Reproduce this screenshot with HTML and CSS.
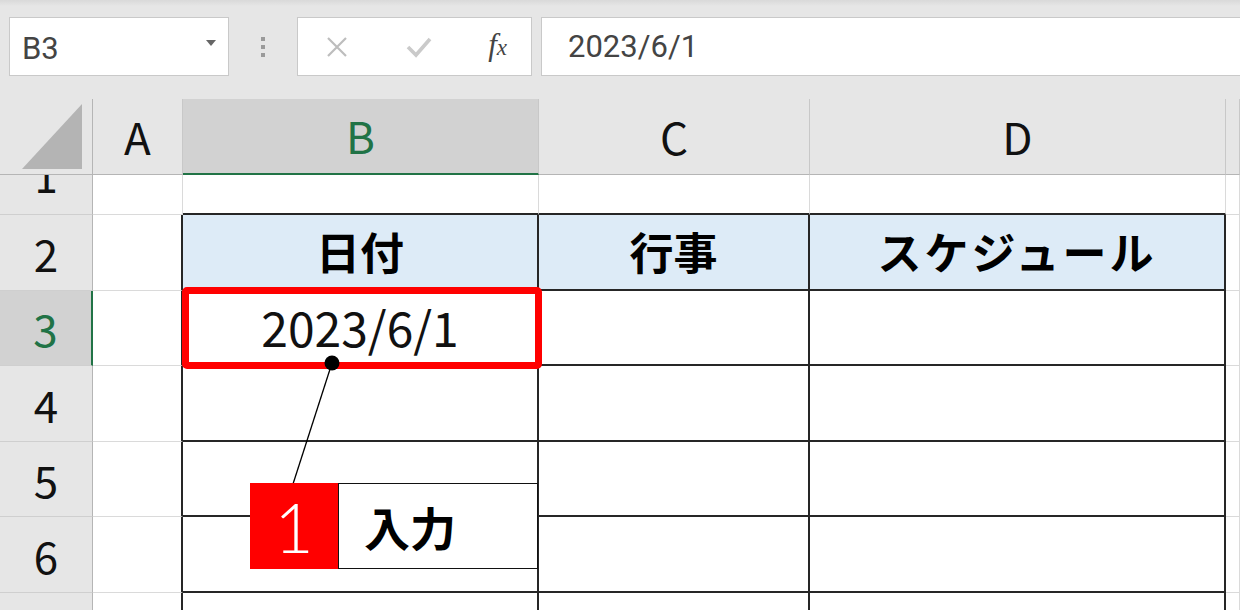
FILE: index.html
```html
<!DOCTYPE html>
<html>
<head>
  <title>B3 - 2023/6/1</title>
<link rel="stylesheet" href="styles.css">
</head>

<body>

<div class='toolbar'>
  <div class='namebox'>
    <span>B3</span>
    <span class='drop'></span>
  </div>
  <div class='grip'><i></i><i></i><i></i></div>
  <div class='fbuttons'>
    <svg class='ico' width='26' height='26' viewBox='0 0 26 26'><path d='M4 4 L22 22 M22 4 L4 22' stroke='#bdbdbd' stroke-width='2.2' fill='none'/></svg>
    <svg class='ico' width='28' height='26' viewBox='0 0 28 26'><path d='M3 13 L11 21 L25 5' stroke='#cacaca' stroke-width='3.6' fill='none'/></svg>
    <span class='fx'>f<small>x</small></span>
  </div>
  <div class='fbar'>2023/6/1</div>
</div>

<div class='sheet'>
  <!-- column headers -->
  <div class='corner'><span class='tri'></span></div>
  <div class='colh'>A</div>
  <div class='colh sel'>B</div>
  <div class='colh'>C</div>
  <div class='colh'>D</div>
  <div class='colh'></div>

  <!-- row 1 -->
  <div class='rowh cut'><span>1</span></div>
  <div class='cell'></div>
  <div class='cell top'></div>
  <div class='cell top'></div>
  <div class='cell top'></div>
  <div class='cell'></div>

  <!-- row 2 -->
  <div class='rowh'>2</div>
  <div class='cell lead'></div>
  <div class='cell tb head'>日付</div>
  <div class='cell tb head'>行事</div>
  <div class='cell tb head kana'>スケジュール</div>
  <div class='cell'></div>

  <!-- row 3 -->
  <div class='rowh sel'>3</div>
  <div class='cell lead'></div>
  <div class='cell tb data active'>2023/6/1<span class='mark'></span></div>
  <div class='cell tb'></div>
  <div class='cell tb'></div>
  <div class='cell'></div>

  <!-- row 4 -->
  <div class='rowh'>4</div>
  <div class='cell lead'></div>
  <div class='cell tb'></div>
  <div class='cell tb'></div>
  <div class='cell tb'></div>
  <div class='cell'></div>

  <!-- row 5 -->
  <div class='rowh'>5</div>
  <div class='cell lead'></div>
  <div class='cell tb'></div>
  <div class='cell tb'></div>
  <div class='cell tb'></div>
  <div class='cell'></div>

  <!-- row 6 -->
  <div class='rowh'>6</div>
  <div class='cell lead'></div>
  <div class='cell tb'></div>
  <div class='cell tb'></div>
  <div class='cell tb'></div>
  <div class='cell'></div>

  <!-- row 7, cut by the window -->
  <div class='rowh end'></div>
  <div class='cell lead end'></div>
  <div class='cell tb end'></div>
  <div class='cell tb end'></div>
  <div class='cell tb end'></div>
  <div class='cell end'></div>
</div>

<svg class='leader' width='1240' height='610'>
  <line x1='332' y1='363' x2='293' y2='484' stroke='#000' stroke-width='1.3'/>
  <circle cx='332' cy='363' r='7.5' fill='#000'/>
</svg>

<div class='callout'>
  <div class='num'>1</div>
  <div class='label'>入力</div>
</div>

</body>
</html>
```

FILE: styles.css
```css
html, body {
  background: #e6e6e6;
}
body {
  margin: 0;
  width: 1240px;
  height: 610px;
  overflow: hidden;
  position: relative;
  font-family: 'Noto Sans CJK JP', 'Noto Sans', sans-serif;
  color: #111;
}

/* formula bar */
.toolbar {
  height: 99px;
  box-sizing: border-box;
  padding: 17px 0 0 9px;
  display: flex;
  align-items: flex-start;
  background: linear-gradient(#d9d9d9, #e6e6e6 6px);
}
.namebox, .fbuttons, .fbar {
  height: 59px;
  box-sizing: border-box;
  background: #fff;
  border: 1px solid #c9c9c9;
  display: flex;
  align-items: center;
}
.namebox {
  width: 220px;
  padding: 4px 12px 0 12px;
  justify-content: space-between;
  font-family: 'Roboto', 'Noto Sans', sans-serif;
  font-size: 31px;
  color: #444;
}
.drop {
  width: 0;
  height: 0;
  border-left: 5px solid transparent;
  border-right: 5px solid transparent;
  border-top: 6px solid #666;
  margin-top: -12px;
}
.grip {
  width: 68px;
  height: 59px;
  display: flex;
  flex-direction: column;
  align-items: center;
  justify-content: center;
  gap: 4px;
}
.grip i {
  width: 4px;
  height: 4px;
  background: #9a9a9a;
}
.fbuttons {
  width: 235px;
  padding: 0 24px 0 26px;
  justify-content: space-between;
}
.ico {
  display: block;
}
.fx {
  font-family: 'Liberation Serif', serif;
  font-style: italic;
  font-size: 31px;
  color: #444;
  margin-top: -4px;
}
.fx small {
  font-size: 23px;
}
.fbar {
  flex: 1;
  margin-left: 9px;
  margin-right: -10px;
  padding: 0 0 0 26px;
  font-family: 'Roboto', 'Noto Sans', sans-serif;
  font-size: 31px;
  color: #444;
}

/* grid */
.sheet {
  display: grid;
  grid-template-columns: 93px 90px 356px 271px 416px 1fr;
  grid-template-rows: 76px 40px 76px 75px 76px 75px 76px 1fr;
  height: 511px;
  background: #fff;
}
.sheet > div {
  box-sizing: border-box;
}
.corner {
  background: #e6e6e6;
  border-right: 1px solid #b5b5b5;
  border-bottom: 1px solid #b5b5b5;
  display: flex;
  align-items: flex-end;
  justify-content: flex-end;
  padding: 0 10px 5px 0;
}
.tri {
  width: 0;
  height: 0;
  border-left: 60px solid transparent;
  border-bottom: 65px solid #b4b4b4;
}
.colh {
  background: #e6e6e6;
  border-right: 1px solid #c8c8c8;
  border-bottom: 1px solid #b5b5b5;
  display: flex;
  align-items: center;
  justify-content: center;
  font-size: 44px;
  color: #111;
  padding-bottom: 2px;
}
.colh.sel {
  background: #d2d2d2;
  color: #217346;
  border-bottom: 2px solid #217346;
}
.rowh {
  background: #e6e6e6;
  border-right: 1px solid #b5b5b5;
  border-bottom: 1px solid #cfcfcf;
  display: flex;
  align-items: center;
  justify-content: center;
  font-size: 44px;
  color: #111;
}
.rowh.sel {
  background: #d2d2d2;
  color: #217346;
  border-right: 2px solid #217346;
}
.rowh.cut {
  overflow: hidden;
  align-items: flex-start;
}
.rowh.cut span {
  display: block;
  height: 76px;
  line-height: 76px;
  margin-top: -34px;
  font-family: 'DejaVu Sans', sans-serif;
  font-size: 40px;
}
.cell {
  border-right: 1px solid #dadada;
  border-bottom: 1px solid #dadada;
  display: flex;
  align-items: center;
  justify-content: center;
}
.cell.top {
  border-bottom: 2px solid #262626;
}
.cell.lead {
  border-right: 2px solid #262626;
}
.cell.tb {
  border-right: 2px solid #262626;
  border-bottom: 2px solid #262626;
}
.sheet > .end {
  border-bottom: none;
}
.head {
  background: #ddebf7;
  font-weight: bold;
  font-size: 44px;
  color: #000;
  padding-bottom: 2px;
}
.kana {
  letter-spacing: 3px;
}
.data {
  font-size: 48px;
  color: #111;
  padding-bottom: 4px;
}
.active {
  position: relative;
}
.mark {
  position: absolute;
  top: -4px;
  bottom: -5px;
  left: -1px;
  right: -5px;
  border: 7px solid #ff0000;
  border-radius: 5px;
}

/* annotation */
.leader {
  position: absolute;
  left: 0;
  top: 0;
}
.callout {
  position: absolute;
  left: 250px;
  top: 483px;
  display: flex;
  height: 86px;
}
.num {
  width: 88px;
  background: #ff0000;
  color: #fff;
  font-family: 'Lato', 'Noto Sans', sans-serif;
  font-weight: 300;
  font-size: 68px;
  display: flex;
  align-items: center;
  justify-content: center;
}
.label {
  width: 200px;
  box-sizing: border-box;
  background: #fff;
  border: 1.5px solid #111;
  padding-left: 25px;
  display: flex;
  align-items: center;
  font-weight: bold;
  font-size: 46px;
  color: #000;
}
```
